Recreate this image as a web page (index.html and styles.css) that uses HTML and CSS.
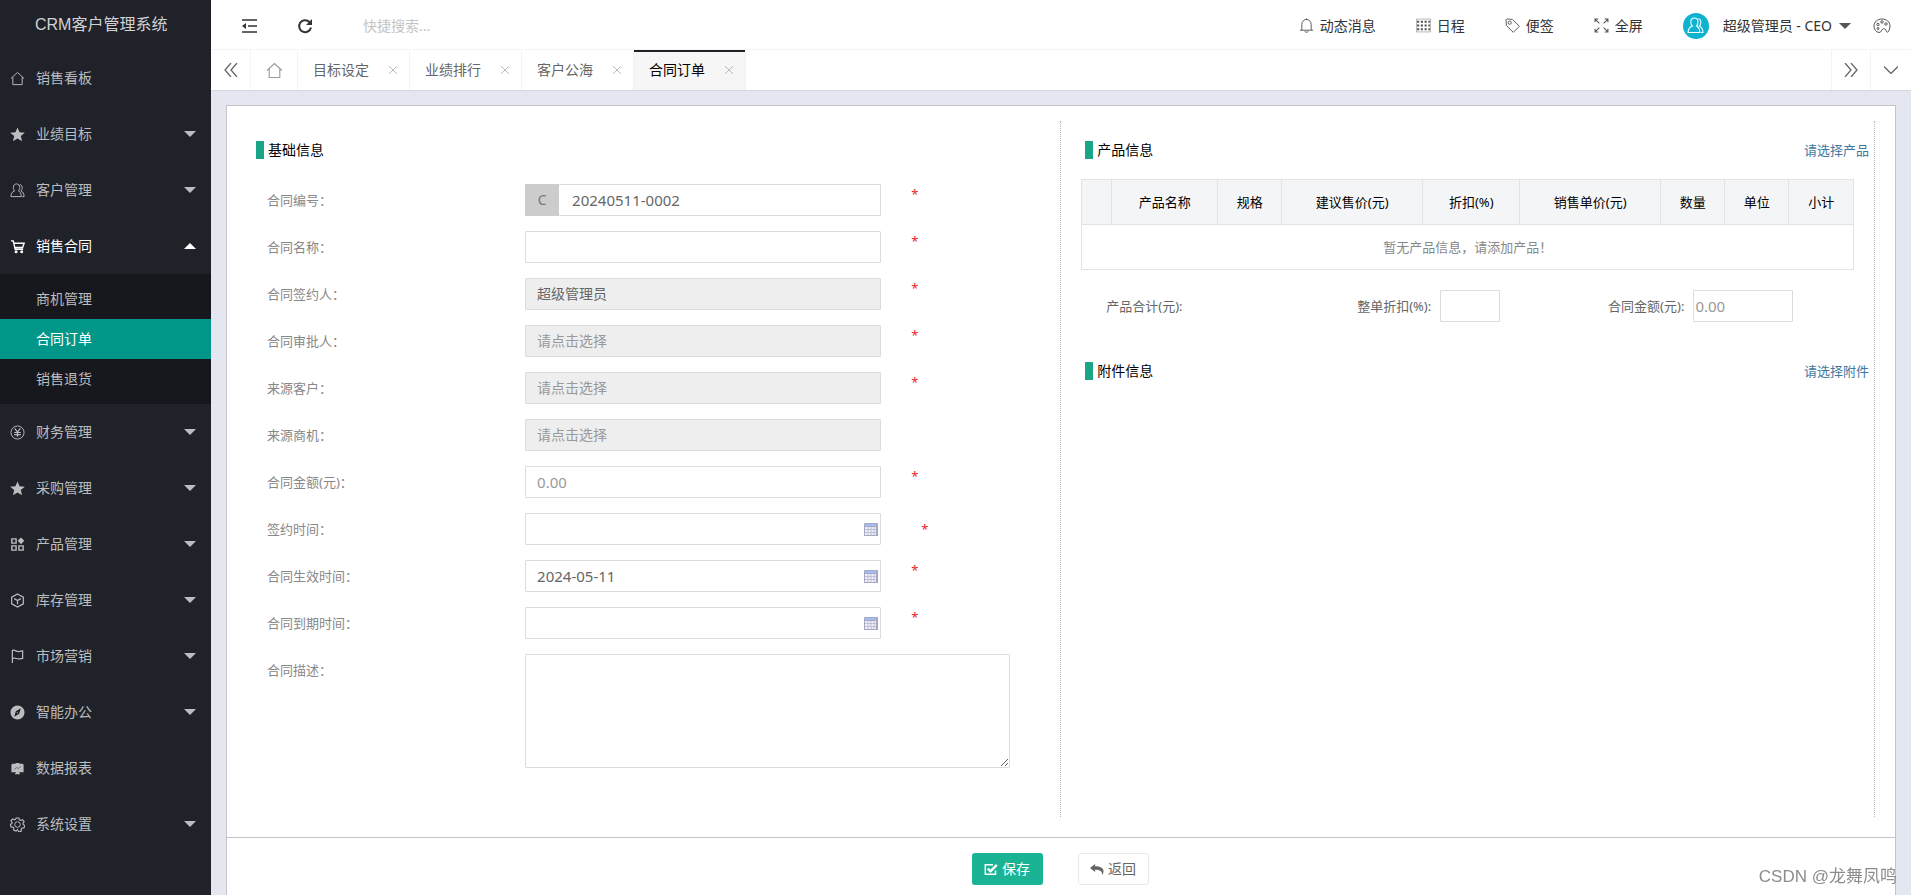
FILE: index.html
```html
<!DOCTYPE html>
<html lang="zh-CN">
<head>
<meta charset="utf-8">
<title>CRM客户管理系统</title>
<link rel="stylesheet" href="styles.css">
</head>
<body>
<svg class="defs" aria-hidden="true">
  <symbol id="home" viewBox="0 0 16 16"><path d="M1 8 8 1.500l7 6.500M3 6.500v8h10v-8"/></symbol>
  <symbol id="star" viewBox="0 0 16 16"><path class="solid" d="M8 .500l2.200 5.200 5.600.400-4.300 3.600 1.400 5.500L8 12.200l-4.900 3 1.400-5.500L.200 6.100l5.600-.400z"/></symbol>
  <symbol id="users" viewBox="0 0 16 16"><path d="M5 8.500C3.800 7.500 3.600 6 3.600 4.700 3.600 2.500 4.900 1 7 1s3.300 1.500 3.300 3.700c0 1.300-.3 2.800-1.400 3.800C11 9.500 12 10.500 12 14.500H1C1 10.500 2.500 9.500 5 8.500zM10.500 1.700c1.800.3 2.700 1.600 2.500 3.800-.1 1.200-.6 2.400-1.400 3 2.400 1.200 3.400 2.500 3.400 6h-2"/></symbol>
  <symbol id="cart" viewBox="0 0 16 16"><path stroke-width="1.500" d="M1 2h2.500l2 9H14M4.300 4.500H15l-1.500 4.500H5.300"/><circle class="solid" cx="6.500" cy="13.500" r="1.600"/><circle class="solid" cx="12.500" cy="13.500" r="1.600"/></symbol>
  <symbol id="yen" viewBox="0 0 16 16"><circle cx="8" cy="8" r="7"/><path stroke-width="1.300" d="M5 3.500l3 4 3-4M8 7.500v5M4.500 8h7M4.500 10.300h7"/></symbol>
  <symbol id="blocks" viewBox="0 0 16 16"><path stroke-width="1.500" d="M2 2h4.500v4.500H2zM2 9.500h4.500V14H2zM9.500 9.500H14V14H9.500z"/><path class="solid" d="M11.700.6l3.500 3.500-3.500 3.500-3.500-3.500z"/></symbol>
  <symbol id="cube" viewBox="0 0 16 16"><path stroke-width="1.300" d="M8 1l6.200 3.400v7.200L8 15l-6.200-3.400V4.400zM4.500 6L8 8l3.500-2M8 8v4"/></symbol>
  <symbol id="flag" viewBox="0 0 16 16"><path stroke-width="1.300" d="M2.500 15V1.500c3-1 4 1.500 7 1.200 1.500 0 2.500-.7 4-.7v8c-2 .3-3 .8-4.500.6-2.500-.2-3.500-1.500-6.500-.6"/></symbol>
  <symbol id="compass" viewBox="0 0 16 16"><path class="solid" fill-rule="evenodd" d="M8 .500a7.500 7.500 0 100 15 7.500 7.500 0 000-15zM11.500 3.500L9.800 9.300 4.500 12.500 6.200 6.700zM8.300 7L7 8.500l1.300.3z"/></symbol>
  <symbol id="board" viewBox="0 0 16 16"><path class="solid" d="M2.500 3H6V2h4v1h3.500l1 1v8H9.500l1.500 2H5l1.500-2h-5V4z"/><path stroke="#20222a" d="M4.500 9L7 7l2 1 2.800-2.500" stroke-width=".5"/></symbol>
  <symbol id="gear" viewBox="0 0 16 16"><circle cx="8" cy="8" r="3"/><path stroke-width="1.200" d="M6.500 1h3l.5 2 1.500.7 1.900-.9 1.700 2.200-1.300 1.500.3 1.500 1.600 1-.8 2.700-2 .1-1 1.200.2 2-2.600 1L8 13.400 6.400 15l-2.500-1 .1-2-1-1.200-2-.2-.7-2.600L2 7l.2-1.500L.900 4l1.800-2 1.900.9L6 2.500z"/></symbol>
  <symbol id="caret" viewBox="0 0 12 6"><path class="solid" d="M0 0h12L6 6z"/></symbol>
  <symbol id="fold" viewBox="0 0 16 14"><path stroke-width="1.500" d="M1 1h15M7 7h9M1 13h15"/><path class="solid" d="M1 7l4-3v6z"/></symbol>
  <symbol id="refresh" viewBox="0 0 16 16"><path stroke-width="2" d="M14 9.500A6 6 0 1 1 12.500 4"/><path class="solid" d="M15 1v6H9z"/></symbol>
  <symbol id="bell" viewBox="0 0 16 16"><path d="M1 13h14M3 13V7a5 5.500 0 0110 0v6M8 2V.500M6 14.500q2 1.500 4 0"/></symbol>
  <symbol id="grid" viewBox="0 0 14 14"><path stroke-width="2" stroke-dasharray="2 1.500" d="M1 3.500h12M1 7h12M1 10.500h12"/><path stroke-width=".4" d="M.500 1h13v12H.500z"/></symbol>
  <symbol id="tag" viewBox="0 0 16 16"><path d="M1 2l1-1 6 .500 7.300 7.300-6.500 6.500L1.500 8z"/><circle cx="5" cy="5" r="1.700"/></symbol>
  <symbol id="full" viewBox="0 0 14 14"><path d="M1 4V1h3M1 1l4 4M10 1h3v3M13 1L9 5M1 10v3h3M1 13l4-4M13 10v3h-3M13 13L9 9"/></symbol>
  <symbol id="palette" viewBox="0 0 18 16"><path d="M6 14.500C2.500 14 1 11 1 8c0-4 3.500-7 8-7s8 3 8 7c0 2-.5 4-1.500 5.500-.8 1-1.800.8-2.300-.5-.7-2-1.700-2.500-3-2.200-2 .4-1.700 4-4.200 3.700z"/><circle cx="5" cy="6.500" r="1.200"/><circle cx="9" cy="4" r="1.200"/><circle cx="13" cy="6" r="1.200"/><circle cx="5" cy="10.500" r="1"/></symbol>
  <symbol id="dleft" viewBox="0 0 14 14"><path stroke-width="1.300" d="M7 0L1 7l6 7M13 0L7 7l6 7"/></symbol>
  <symbol id="dright" viewBox="0 0 14 14"><path stroke-width="1.300" d="M1 0l6 7-6 7M7 0l6 7-6 7"/></symbol>
  <symbol id="down" viewBox="0 0 14 8"><path stroke-width="1.300" d="M0 .500l7 7 7-7"/></symbol>
  <symbol id="close" viewBox="0 0 10 10"><path d="M1 1l8 8M9 1L1 9"/></symbol>
  <symbol id="cal" viewBox="0 0 14 13"><path fill="#a3a9c4" stroke="none" d="M0 1q0-1 1-1h12q1 0 1 1v12H0z"/><path fill="#a9bcf0" stroke="none" d="M1 1h11v2H1z"/><path fill="#eef0f8" stroke="none" d="M1 4h11v8H1z"/><path stroke="#b9b4cc" stroke-width=".8" d="M1 6.500h11M1 9.500h11M4 4v8M7 4v8M10 4v8"/></symbol>
  <symbol id="check" viewBox="0 0 14 13"><path stroke-width="1.500" d="M11.500 7.500v3.800H1.300V1.700H9"/><path stroke-width="2.400" d="M3.800 5.500l2.700 2.800 6.300-6.500"/></symbol>
  <symbol id="reply" viewBox="0 0 15 12"><path class="solid" d="M0 4.300L5.500 0v2.600C11 2.600 14.500 4.500 14.500 8c0 1.700-.7 3-1.700 4 .6-4-1.800-5.700-7.300-5.700v2.500z"/></symbol>
</svg>
<div class="app">
  <aside class="side">
    <h1 class="logo">CRM客户管理系统</h1>
    <nav>
      <a class="item" href="#"><svg class="ico"><use href="#home"/></svg><span>销售看板</span></a>
      <a class="item" href="#"><svg class="ico"><use href="#star"/></svg><span>业绩目标</span><svg class="caret"><use href="#caret"/></svg></a>
      <a class="item" href="#"><svg class="ico"><use href="#users"/></svg><span>客户管理</span><svg class="caret"><use href="#caret"/></svg></a>
      <a class="item open" href="#"><svg class="ico"><use href="#cart"/></svg><span>销售合同</span><svg class="caret"><use href="#caret"/></svg></a>
      <div class="sub">
        <a href="#">商机管理</a>
        <a class="active" href="#">合同订单</a>
        <a href="#">销售退货</a>
      </div>
      <a class="item" href="#"><svg class="ico"><use href="#yen"/></svg><span>财务管理</span><svg class="caret"><use href="#caret"/></svg></a>
      <a class="item" href="#"><svg class="ico"><use href="#star"/></svg><span>采购管理</span><svg class="caret"><use href="#caret"/></svg></a>
      <a class="item" href="#"><svg class="ico"><use href="#blocks"/></svg><span>产品管理</span><svg class="caret"><use href="#caret"/></svg></a>
      <a class="item" href="#"><svg class="ico"><use href="#cube"/></svg><span>库存管理</span><svg class="caret"><use href="#caret"/></svg></a>
      <a class="item" href="#"><svg class="ico"><use href="#flag"/></svg><span>市场营销</span><svg class="caret"><use href="#caret"/></svg></a>
      <a class="item" href="#"><svg class="ico"><use href="#compass"/></svg><span>智能办公</span><svg class="caret"><use href="#caret"/></svg></a>
      <a class="item" href="#"><svg class="ico"><use href="#board"/></svg><span>数据报表</span></a>
      <a class="item" href="#"><svg class="ico"><use href="#gear"/></svg><span>系统设置</span><svg class="caret"><use href="#caret"/></svg></a>
    </nav>
  </aside>
  <div class="main">
    <header class="top">
      <button class="tool" aria-label="收起菜单"><svg class="i-fold"><use href="#fold"/></svg></button>
      <button class="tool" aria-label="刷新"><svg class="i-ref"><use href="#refresh"/></svg></button>
      <input class="search" type="text" placeholder="快捷搜索..." aria-label="快捷搜索">
      <div class="links">
        <a href="#"><svg class="ico"><use href="#bell"/></svg>动态消息</a>
        <a href="#"><svg class="ico"><use href="#grid"/></svg>日程</a>
        <a href="#"><svg class="ico"><use href="#tag"/></svg>便签</a>
        <a href="#"><svg class="ico"><use href="#full"/></svg>全屏</a>
      </div>
      <a class="user" href="#"><span class="avatar"><svg><use href="#users"/></svg></span>超级管理员 - CEO<svg class="caret"><use href="#caret"/></svg></a>
      <button class="theme" aria-label="主题"><svg><use href="#palette"/></svg></button>
    </header>
    <div class="tabs">
      <button class="ctl" aria-label="向左"><svg><use href="#dleft"/></svg></button>
      <a class="home" href="#" aria-label="首页"><svg><use href="#home"/></svg></a>
      <a class="tab" href="#">目标设定<svg><use href="#close"/></svg></a>
      <a class="tab" href="#">业绩排行<svg><use href="#close"/></svg></a>
      <a class="tab" href="#">客户公海<svg><use href="#close"/></svg></a>
      <a class="tab on" href="#">合同订单<svg><use href="#close"/></svg></a>
      <button class="ctl right" aria-label="向右"><svg><use href="#dright"/></svg></button>
      <button class="ctl last" aria-label="更多"><svg class="i-down"><use href="#down"/></svg></button>
    </div>
    <main class="content">
      <form class="card">
        <div class="panels">
          <section class="panel base">
            <div class="head"><h2>基础信息</h2></div>
            <div class="row"><label for="f1">合同编号：</label><div class="field group"><span class="pre">C</span><input id="f1" class="num" type="text" value="20240511-0002"></div><i>*</i></div>
            <div class="row"><label for="f2">合同名称：</label><div class="field"><input id="f2" type="text"></div><i>*</i></div>
            <div class="row"><label for="f3">合同签约人：</label><div class="field"><input id="f3" type="text" value="超级管理员" readonly></div><i>*</i></div>
            <div class="row"><label for="f4">合同审批人：</label><div class="field"><input id="f4" type="text" placeholder="请点击选择" readonly></div><i>*</i></div>
            <div class="row"><label for="f5">来源客户：</label><div class="field"><input id="f5" type="text" placeholder="请点击选择" readonly></div><i>*</i></div>
            <div class="row"><label for="f6">来源商机：</label><div class="field"><input id="f6" type="text" placeholder="请点击选择" readonly></div></div>
            <div class="row"><label for="f7">合同金额(元)：</label><div class="field"><input id="f7" class="num" type="text" placeholder="0.00"></div><i>*</i></div>
            <div class="row"><label for="f8">签约时间：</label><div class="field"><input id="f8" class="num" type="text"><svg class="cal"><use href="#cal"/></svg></div><i class="mid">*</i></div>
            <div class="row"><label for="f9">合同生效时间：</label><div class="field"><input id="f9" class="num" type="text" value="2024-05-11"><svg class="cal"><use href="#cal"/></svg></div><i>*</i></div>
            <div class="row"><label for="f10">合同到期时间：</label><div class="field"><input id="f10" class="num" type="text"><svg class="cal"><use href="#cal"/></svg></div><i>*</i></div>
            <div class="row wide"><label for="f11">合同描述：</label><textarea id="f11"></textarea></div>
          </section>
          <section class="panel goods">
            <div class="head"><h2>产品信息</h2><a href="#">请选择产品</a></div>
            <table>
              <colgroup><col class="w4"><col class="w14"><col class="w8"><col class="w18"><col class="w13"><col class="w18"><col class="w8"><col class="w8"><col></colgroup>
              <thead><tr><th></th><th>产品名称</th><th>规格</th><th>建议售价(元)</th><th>折扣(%)</th><th>销售单价(元)</th><th>数量</th><th>单位</th><th>小计</th></tr></thead>
              <tbody><tr><td colspan="9">暂无产品信息，请添加产品！</td></tr></tbody>
            </table>
            <div class="sums">
              <div>产品合计(元):</div>
              <div><label for="s1">整单折扣(%):</label><input id="s1" class="num short" type="text"></div>
              <div><label for="s2">合同金额(元):</label><input id="s2" class="num" type="text" placeholder="0.00"></div>
            </div>
            <div class="head"><h2>附件信息</h2><a href="#">请选择附件</a></div>
          </section>
        </div>
        <footer class="foot">
          <button class="btn save" type="button"><svg><use href="#check"/></svg>保存</button>
          <button class="btn back" type="button"><svg><use href="#reply"/></svg>返回</button>
        </footer>
      </form>
    </main>
  </div>
</div>
<div class="mark">CSDN @龙舞凤鸣</div>
</body>
</html>
```

FILE: styles.css
```css
* { box-sizing: border-box; }
body { margin: 0; font: 14px/20px "Noto Sans", "Noto Sans CJK SC", sans-serif; color: #333; background: #fff; }
a { color: inherit; text-decoration: none; }
button { border: 0; padding: 0; background: none; font: inherit; color: inherit; cursor: pointer; }
input, textarea { font: inherit; color: #666; border: 1px solid #d9dde2; border-radius: 1px; outline: 0; background: #fff; }
input::placeholder { color: #999; opacity: 1; }
h1, h2 { margin: 0; font-weight: 400; }
svg { display: block; fill: none; stroke: currentColor; flex: none; }
.solid { fill: currentColor; stroke: none; }
.defs { display: none; }
.app { display: flex; min-height: 100vh; }

.side { width: 211px; flex: none; background: #20222a; color: #bcbdbf; }
.logo { height: 50px; padding-left: 35px; font: 16px/50px "Liberation Sans", "Noto Sans CJK SC", sans-serif; color: #d2d2d4; }
.item { display: flex; align-items: center; height: 56px; padding: 0 15px 0 10px; }
.item .ico { width: 15px; height: 15px; margin-right: 11px; }
.caret { width: 12px; height: 6px; }
.item .caret { margin-left: auto; }
.open { color: #fff; }
.open .caret { transform: rotate(180deg); }
.sub { background: #17181d; padding: 5px 0; }
.sub a { display: block; padding-left: 36px; line-height: 40px; }
.sub .active { background: #009688; color: #fff; }

.main { flex: 1; min-width: 0; display: flex; flex-direction: column; }
.top { display: flex; align-items: center; height: 50px; border-bottom: 1px solid #f4f4f4; padding: 2px 20px 0 30px; }
.i-fold { width: 16px; height: 14px; }
.tool { margin-right: 40px; }
.i-ref { width: 16px; height: 16px; }
.search { border: 0; width: 200px; padding: 0; margin-left: 10px; }
.search::placeholder { color: #c4c4c4; }
.links { display: flex; gap: 40px; margin-left: auto; }
.links a { display: flex; align-items: center; gap: 6px; }
.links .ico { width: 15px; height: 15px; color: #555; }
.user { display: flex; align-items: center; margin-left: 40px; }
.avatar { display: grid; place-items: center; width: 26px; height: 26px; border-radius: 50%; background: #0fb2d0; color: #fff; margin-right: 14px; }
.avatar svg { width: 17px; height: 17px; }
.user .caret { margin-left: 7px; color: #555; }
.theme { margin-left: 22px; color: #555; }
.theme svg { width: 18px; height: 16px; }

.tabs { display: flex; height: 41px; border-bottom: 1px solid #d3d6da; color: #666; }
.ctl { width: 40px; display: grid; place-items: center; border-right: 1px solid #f4f4f4; }
.ctl svg { width: 14px; height: 14px; }
.ctl .i-down { height: 8px; }
.ctl.right { margin-left: auto; border-left: 1px solid #f4f4f4; }
.ctl.last { border-right: 0; }
.home { width: 47px; display: grid; place-items: center; border-right: 1px solid #f4f4f4; color: #999; }
.home svg { width: 17px; height: 17px; }
.tab { display: flex; align-items: center; justify-content: space-between; width: 112px; padding: 0 11px 0 15px; border-right: 1px solid #f4f4f4; }
.tab svg { width: 10px; height: 10px; color: #bbb; }
.tab.on { background: #f6f6f6; color: #000; box-shadow: inset 0 2px #20222a; }

.content { flex: 1; display: flex; padding: 14px 15px 0; background: #e4e7ef; }
.card { flex: 1; background: #fff; border: 1px solid #c3c4c8; border-bottom: 0; }
.panels { display: grid; grid-template-columns: 50.2% 1fr; padding: 15px 20px 20px 14px; border-bottom: 1px solid #c3c3c5; }
.panel { border-right: 1px dotted #b4b4b4; }
.head { display: flex; align-items: center; justify-content: space-between; height: 18px; font-size: 13px; }
.head h2 { border-left: 8px solid #1aa589; padding-left: 4px; font-size: 14px; line-height: 18px; color: #000; }
.head a { color: #41789f; }

.base { padding: 20px 0 49px 15px; }
.base .head { margin-bottom: 25px; }
.row { display: grid; grid-template-columns: 258fr 356fr 179fr; margin: 0 0 15px 11px; }
.row label { font-size: 13px; line-height: 32px; color: #888; }
.field { position: relative; display: flex; height: 32px; }
.field input { flex: 1; min-width: 0; padding: 0 11px; }
.field input[readonly] { background: #eee; }
.num { font-size: 15px; }
.pre { width: 34px; line-height: 32px; text-align: center; background: #ccc; color: #777; }
.group .num { border-left: 0; padding-left: 13px; }
.cal { position: absolute; right: 3px; top: 10px; width: 14px; height: 13px; }
.row i { font-style: normal; font-size: 13px; color: #e8232a; padding-left: 30px; line-height: 20px; }
.row .mid { padding-left: 40px; line-height: 32px; }
.wide { grid-template-columns: 258fr 485fr 50fr; margin-bottom: 0; }
.wide textarea { height: 114px; }

.goods { padding: 20px 5px 0 20px; }
.goods .head { padding-left: 4px; }
.goods table { width: calc(100% - 15px); margin: 20px 0; border-collapse: collapse; table-layout: fixed; font-size: 13px; }
.goods th, .goods td { height: 45px; padding: 0; border: 1px solid #e2e3e5; font-weight: 400; text-align: center; }
.goods th { background: #f4f5f7; color: #000; }
.goods td { color: #888; }
.w4 { width: 30px; }
.w14 { width: 106px; }
.w8 { width: 64px; }
.w18 { width: 141px; }
.w13 { width: 97px; }
.sums { display: grid; grid-template-columns: 1fr 1fr 1fr; padding-left: 25px; margin-right: 10px; margin-bottom: 40px; font-size: 13px; color: #666; }
.sums div { display: flex; align-items: center; gap: 9px; height: 32px; }
.sums input { width: 100px; height: 32px; padding: 0 1px; }
.sums .short { width: 60px; }

.foot { display: flex; justify-content: center; gap: 35px; padding: 15px 2px 10px 0; }
.btn { display: flex; align-items: center; justify-content: center; gap: 4px; width: 71px; height: 32px; border-radius: 3px; }
.btn svg { width: 14px; height: 13px; }
.save { background: #1ab394; color: #fff; }
.back { border: 1px solid #e7eaec; color: #666; }
.mark { position: fixed; right: 14px; bottom: 6px; font: 17px/24px "Liberation Sans", "Noto Sans CJK SC", sans-serif; color: #8c8c8c; }
```
